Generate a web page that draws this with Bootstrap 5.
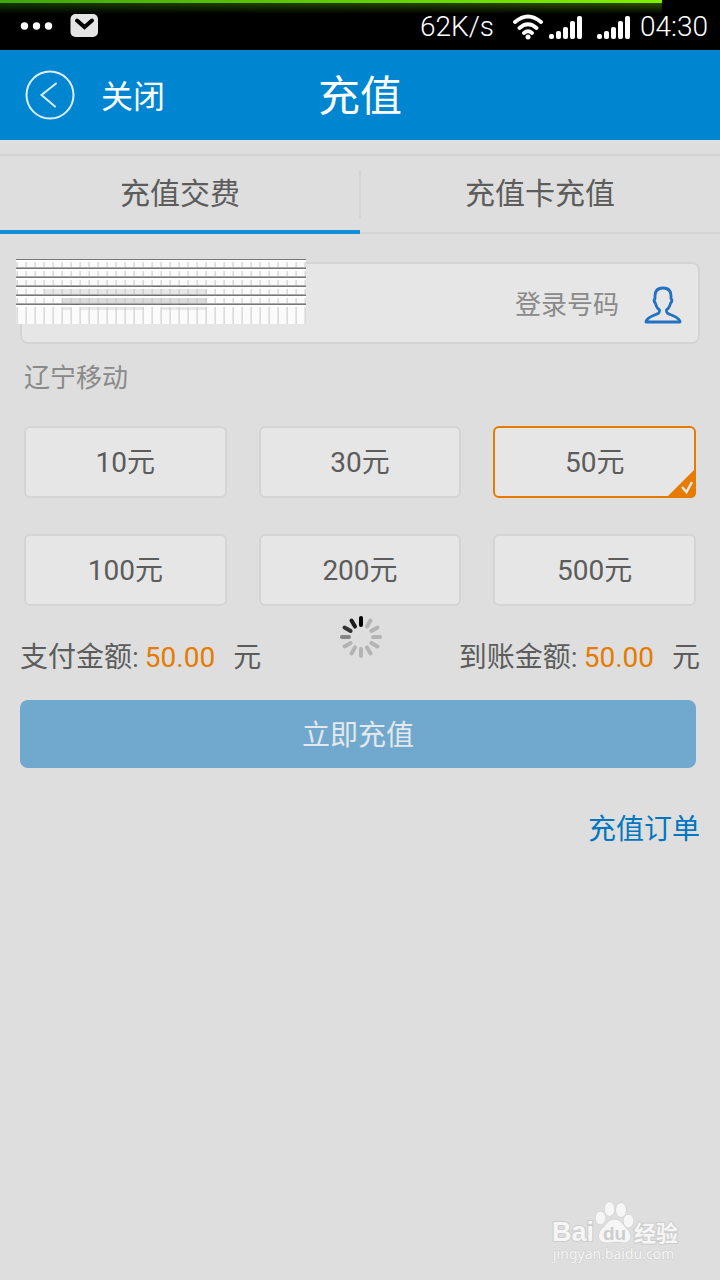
<!DOCTYPE html>
<html lang="zh-CN">
<head>
<meta charset="utf-8">
<meta name="viewport" content="width=device-width, initial-scale=1">
<title>充值</title>
<link href="https://cdn.jsdelivr.net/npm/bootstrap@5.3.0/dist/css/bootstrap.min.css" rel="stylesheet">
<style>
  body { background: #dedede; color: #5c5c5c; font-family: Roboto, "Noto Sans CJK SC", sans-serif; font-size: 28px; line-height: 40px; }
  .status-bar { height: 50px; background: #000; color: #fff; font-weight: 300; padding: 4px 12px 0 20px; }
  .load-line { height: 14px; width: 92%; background: linear-gradient(#0000 3px, #000a 3px, #000 14px), linear-gradient(90deg, #3fa60a, #80f000); }
  .title-bar { height: 90px; background: #0086d1; color: #fff; }
  .title-bar h1 { font-size: 42px; line-height: 60px; font-weight: 400; padding-top: 4px; }
  .back-link { font-size: 32px; left: 25px; top: 20px; gap: 26px; }
  .back-link span { padding-top: 4px; }
  .pay-tabs { margin-top: 14px; border-top: 2px solid #d4d4d4; border-bottom: 2px solid #d4d4d4; font-size: 30px; }
  .pay-tabs .nav-link { height: 78px; margin-bottom: -2px; padding: 0; color: #5c5c5c; border: 0; border-bottom: 4px solid transparent; border-radius: 0; line-height: 76px; background: none; }
  .pay-tabs .nav-link.active { border-bottom-color: #168dd6; }
  .tab-rule { width: 2px; height: 48px; margin: 14px -1px 0; background: #d4d4d4; }
  .number-box { height: 82px; margin-top: 28px; border: 2px solid #d4d4d4; border-radius: 8px; background: #e6e6e6; padding: 4px 16px 0; gap: 25px; }
  .number-box input { background: none; font-size: 28px; }
  .number-box label, .carrier { font-size: 26px; color: #8a8a8a; }
  .mosaic { left: -6px; top: -5px; }
  .carrier { margin: 14px 4px 0; }
  .amounts { display: grid; grid-template-columns: repeat(3, 1fr); gap: 36px 32px; margin: 28px 4px 0; }
  .amount { --bs-btn-bg: #e6e6e6; --bs-btn-border-color: #d4d4d4; --bs-btn-color: #5c5c5c; --bs-btn-active-bg: #e6e6e6; --bs-btn-active-border-color: #e67b00; --bs-btn-active-color: #5c5c5c; height: 72px; padding: 0; border-width: 2px; border-radius: 6px; font-size: 28px; line-height: 70px; position: relative; }
  .tick { position: absolute; right: -2px; bottom: -2px; display: none; }
  .btn-check:checked + .amount .tick { display: block; }
  .totals { margin-top: 32px; }
  .sum { color: #e67b00; margin: 0 18px 0 6px; }
  .pay-now { height: 68px; margin: 22px 4px 0 0; padding: 4px 0 0; border: 0; border-radius: 8px; font-size: 28px; background: #71a8cd; color: #e2e8ec; }
  .orders { margin-top: 42px; color: #0077bf; }
  .busy { left: 50%; top: 616px; margin-left: -20px; }
  .site-mark { right: 36px; top: 1196px; }
  .site-mark text { font-family: "Noto Sans", "Noto Sans CJK SC", sans-serif; }
  .site-mark .latin { font-family: "Liberation Sans", sans-serif; }
</style>
</head>
<body>
<div class="position-relative min-vh-100">
  <div class="status-bar position-relative d-flex align-items-center">
    <div class="load-line position-absolute top-0 start-0"></div>
    <svg class="position-relative" width="80" height="26" viewBox="0 0 80 26" aria-hidden="true">
      <g fill="#fff"><circle cx="4.500" cy="12" r="3.700"/><circle cx="16.500" cy="12" r="3.700"/><circle cx="28.500" cy="12" r="3.700"/></g>
      <rect x="50.500" y="0" width="27.500" height="23" rx="5" fill="#e5e5e5"/>
      <path d="M57 6.500l7.500 6.500L72 6.500" fill="none" stroke="#000" stroke-width="4" stroke-linecap="round"/>
    </svg>
    <span class="ms-auto position-relative">62K/s</span>
    <svg class="position-relative ms-3" width="122" height="26" viewBox="0 0 122 26" aria-hidden="true">
      <g fill="none" stroke="#fff" stroke-width="3.800" stroke-linecap="round"><path d="M5 8q13-11 26 0M9.500 14q8.500-7.500 17 0M14 19q4-3.500 8 0"/></g>
      <circle cx="18" cy="23" r="2.500" fill="#fff"/>
      <g id="bars" fill="#fff"><rect x="39" y="20" width="5" height="5" rx="2"/><rect x="46" y="17" width="5" height="8" rx="2"/><rect x="53" y="13" width="5" height="12" rx="2"/><rect x="60" y="7" width="5" height="18" rx="2"/><rect x="67" y="2" width="5" height="23" rx="2"/></g>
      <use href="#bars" x="48"/>
    </svg>
    <span class="position-relative ms-2">04:30</span>
  </div>

  <header class="title-bar position-relative d-flex align-items-center justify-content-center">
    <a href="#" class="back-link position-absolute d-flex align-items-center text-white text-decoration-none">
      <svg width="50" height="50" viewBox="0 0 50 50" fill="none" stroke="#dcedf8" stroke-width="2" aria-hidden="true"><circle cx="25" cy="25" r="23.500"/><path d="M31 13.500L16.500 25 30 36.500" stroke-linecap="round"/></svg>
      <span>关闭</span>
    </a>
    <h1 class="m-0">充值</h1>
  </header>

  <nav class="pay-tabs nav nav-justified d-flex flex-nowrap">
    <button type="button" class="nav-link active">充值交费</button>
    <div class="tab-rule"></div>
    <button type="button" class="nav-link">充值卡充值</button>
  </nav>

  <main class="container-fluid" style="--bs-gutter-x: 40px">
    <form>
      <div class="number-box position-relative d-flex align-items-center">
        <input id="phone" type="tel" class="form-control border-0 p-0 shadow-none">
        <label for="phone" class="flex-shrink-0">登录号码</label>
        <svg class="flex-shrink-0" width="38" height="38" viewBox="0 0 38 38" fill="none" stroke="#2271c3" stroke-width="2.800" stroke-linejoin="round" aria-hidden="true"><path d="M19 2c-6 0-8 3-8 8v2.500q-2 2 .5 5Q12.500 22 15.500 24c.5 3-1 3.500-6 5.500-5 2-7.500 3.500-7.500 6.500h34c0-3-2.500-4.500-7.500-6.500-5-2-6.500-2.500-6-5.500 3-2 3-4 4-6.500q2.500-3 .5-5V10c0-5-2-8-8-8z"/></svg>
        <svg class="mosaic position-absolute" width="290" height="65" viewBox="0 0 290 65" aria-hidden="true">
          <defs>
            <pattern id="cols" width="9" height="65" patternUnits="userSpaceOnUse"><path fill="#fbfbfb" d="M0 0h9v65H0z"/><path fill="#dcdcdc" d="M1 0h1v65H1z"/><path fill="#e6e6e6" d="M0 0h1v65H0z"/></pattern>
            <pattern id="rows" width="290" height="9" patternUnits="userSpaceOnUse"><path fill="#fff" d="M0 0h290v3H0z"/><path fill="#777" d="M0 0h290v1H0z"/><path fill="#aaa" d="M0 8h290v1H0z"/></pattern>
          </defs>
          <path fill="url(#cols)" d="M0 0h290v65H0z"/>
          <path fill="#bbb" opacity=".3" d="M46 30h145v6H46zM28 30h18v6H28z"/>
          <path fill="#bbb" opacity=".5" d="M46 38h145v6H46zM136 38h9v6h-9zM46 38h9v6h-9z"/>
          <path fill="#ccc" opacity=".4" d="M46 48h9v3h-9zM64 48h64v3H64zM145 48h46v3h-46z"/>
          <path fill="url(#rows)" d="M0 0h290v48H0z"/>
          <path fill="#666" opacity=".6" d="M46 27h18v1H46zM136 27h9v1h-9zM163 27h9v1h-9zM46 36h9v1h-9zM64 36h19v1H64zM128 36h17v1h-17zM172 36h9v1h-9zM55 45h9v1h-9zM145 45h9v1h-9zM163 45h9v1h-9z"/>
        </svg>
      </div>
      <p class="carrier mb-0">辽宁移动</p>

      <div class="amounts" role="radiogroup" aria-label="充值金额">
        <input type="radio" class="btn-check" name="amount" id="a10"><label class="btn amount" for="a10">10元<svg class="tick" width="30" height="30" viewBox="0 0 30 30"><path fill="#e67b00" d="M30 0v24q0 6-6 6H0z"/><path d="M16 19l4.500 5L26 14" fill="none" stroke="#e6e6e6" stroke-width="2.500"/></svg></label>
        <input type="radio" class="btn-check" name="amount" id="a30"><label class="btn amount" for="a30">30元<svg class="tick" width="30" height="30" viewBox="0 0 30 30"><path fill="#e67b00" d="M30 0v24q0 6-6 6H0z"/><path d="M16 19l4.500 5L26 14" fill="none" stroke="#e6e6e6" stroke-width="2.500"/></svg></label>
        <input type="radio" class="btn-check" name="amount" id="a50" checked><label class="btn amount" for="a50">50元<svg class="tick" width="30" height="30" viewBox="0 0 30 30"><path fill="#e67b00" d="M30 0v24q0 6-6 6H0z"/><path d="M16 19l4.500 5L26 14" fill="none" stroke="#e6e6e6" stroke-width="2.500"/></svg></label>
        <input type="radio" class="btn-check" name="amount" id="a100"><label class="btn amount" for="a100">100元<svg class="tick" width="30" height="30" viewBox="0 0 30 30"><path fill="#e67b00" d="M30 0v24q0 6-6 6H0z"/><path d="M16 19l4.500 5L26 14" fill="none" stroke="#e6e6e6" stroke-width="2.500"/></svg></label>
        <input type="radio" class="btn-check" name="amount" id="a200"><label class="btn amount" for="a200">200元<svg class="tick" width="30" height="30" viewBox="0 0 30 30"><path fill="#e67b00" d="M30 0v24q0 6-6 6H0z"/><path d="M16 19l4.500 5L26 14" fill="none" stroke="#e6e6e6" stroke-width="2.500"/></svg></label>
        <input type="radio" class="btn-check" name="amount" id="a500"><label class="btn amount" for="a500">500元<svg class="tick" width="30" height="30" viewBox="0 0 30 30"><path fill="#e67b00" d="M30 0v24q0 6-6 6H0z"/><path d="M16 19l4.500 5L26 14" fill="none" stroke="#e6e6e6" stroke-width="2.500"/></svg></label>
      </div>

      <div class="totals d-flex justify-content-between">
        <div class="d-flex"><span>支付金额:</span><span class="sum">50.00</span><span>元</span></div>
        <div class="d-flex"><span>到账金额:</span><span class="sum">50.00</span><span>元</span></div>
      </div>
      <div class="d-grid"><button type="submit" class="btn pay-now">立即充值</button></div>
    </form>
    <div class="d-flex justify-content-end"><a href="#" class="orders text-decoration-none">充值订单</a></div>
  </main>

  <svg class="busy position-absolute" width="42" height="42" viewBox="-21 -21 42 42" stroke-width="4" stroke-linecap="round" role="img" aria-label="加载中">
    <g stroke="#b4b4b4">
      <path d="M0-19v7" transform="rotate(30)"/><path d="M0-19v7" transform="rotate(60)"/><path d="M0-19v7" transform="rotate(90)"/><path d="M0-19v7" transform="rotate(120)"/><path d="M0-19v7" transform="rotate(150)"/><path d="M0-19v7" transform="rotate(180)"/><path d="M0-19v7" transform="rotate(210)"/><path d="M0-19v7" transform="rotate(240)"/>
    </g>
    <path d="M0-19v7" stroke="#858585" transform="rotate(270)"/><path d="M0-19v7" stroke="#333" transform="rotate(300)"/><path d="M0-19v7" stroke="#1c1c1c" transform="rotate(330)"/><path d="M0-19v7" stroke="#000"/>
  </svg>

  <svg class="site-mark position-absolute" width="132" height="68" viewBox="0 0 132 68" fill="#f6f6f6" stroke="#cdcdcd" stroke-width="1" paint-order="stroke" aria-label="Baidu 经验">
    <ellipse cx="48.500" cy="22" rx="5" ry="6.500"/><ellipse cx="57.500" cy="13" rx="5" ry="7"/><ellipse cx="69" cy="14" rx="5" ry="7"/><ellipse cx="76.500" cy="25" rx="5" ry="6.500"/>
    <path d="M62.500 23.500c-6 0-7.500 4-11 8-7 6-6 15 3 15 4 0 12-1 17 0 8 0 9-8 3-14-5-5-6-9-12-9z"/>
    <text class="latin" x="0" y="45" font-size="27" font-weight="700" stroke-width="2">Bai</text>
    <text class="latin" x="51" y="44" font-size="19" font-weight="700" fill="#cdcdcd" stroke="none">du</text>
    <text x="82" y="45" font-size="22" font-weight="700" stroke-width="2">经验</text>
    <text x="1" y="63" font-size="14" stroke-width="1">jingyan.baidu.com</text>
  </svg>
</div>
<script src="https://cdn.jsdelivr.net/npm/bootstrap@5.3.0/dist/js/bootstrap.bundle.min.js"></script>
</body>
</html>
